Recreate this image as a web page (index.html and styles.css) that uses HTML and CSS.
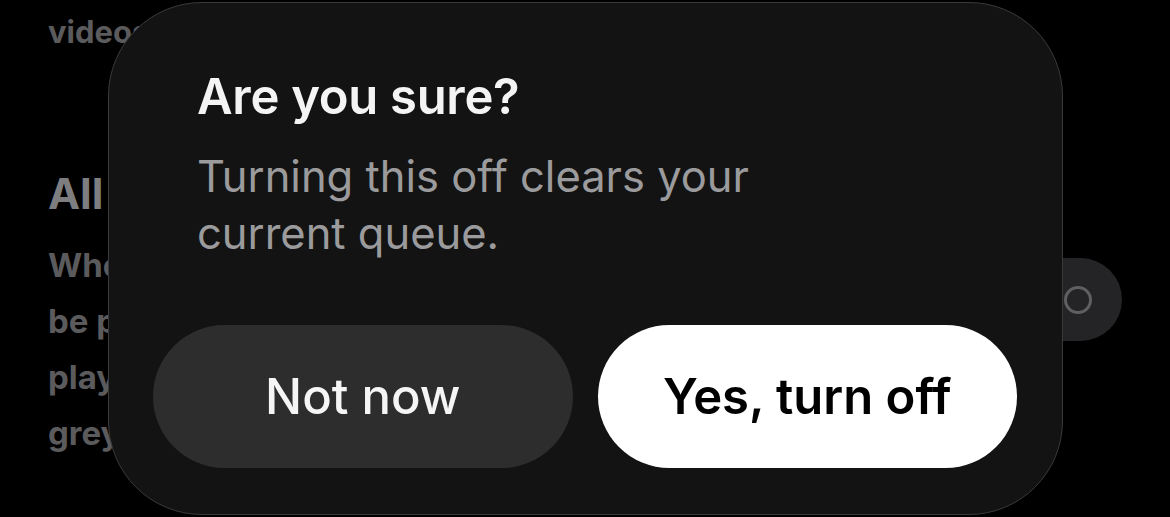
FILE: index.html
```html
<!DOCTYPE html>
<html lang="en">
<head>
<meta charset="utf-8">
<title>Are you sure?</title>
<link rel="stylesheet" href="styles.css">
</head>
<body>
<div class="page">
  <div class="settings">
    <div class="settings-text">
      <p class="prev">videos</p>
      <h2 class="heading">All queue autoplay</h2>
      <p class="desc">When on, similar videos will<br>be played after your queue or<br>playlist ends. When off, it is<br>greyed out.</p>
    </div>
    <div class="toggle"><span class="knob"></span></div>
  </div>

  <div class="dialog" role="dialog">
    <div class="dialog-body">
      <h1 class="title">Are you sure?</h1>
      <p class="message">Turning this off clears your<br>current queue.</p>
    </div>
    <div class="actions">
      <button class="btn btn-secondary">Not now</button>
      <button class="btn btn-primary">Yes, turn off</button>
    </div>
  </div>
</div>
</body>
</html>
```
FILE: styles.css
```css
* { box-sizing: border-box; }
html, body {
  margin: 0;
  padding: 0;
  background: #000;
  width: 1170px;
  height: 517px;
  overflow: hidden;
  font-family: Inter, "Liberation Sans", sans-serif;
}
.page {
  position: relative;
  width: 1170px;
  height: 517px;
}
.settings {
  display: flex;
  justify-content: space-between;
  padding: 0 48px 0 48px;
}
.settings-text {
  padding-top: 12px;
}
.prev {
  margin: 0;
  font-size: 31px;
  line-height: 40px;
  font-weight: 700;
  color: #5b5b5d;
}
.heading {
  margin: 116px 0 0 0;
  font-size: 43px;
  line-height: 50px;
  font-weight: 700;
  color: #7e7e80;
}
.desc {
  margin: 19px 0 0 0;
  font-size: 33px;
  line-height: 56px;
  font-weight: 700;
  color: #5b5b5d;
}
.toggle {
  margin-top: 258px;
  width: 120px;
  height: 83px;
  border-radius: 42px;
  background: #242426;
  display: flex;
  align-items: center;
  padding-left: 62px;
}
.knob {
  width: 28px;
  height: 28px;
  border-radius: 50%;
  border: 3px solid #5f5f61;
}
.dialog {
  position: absolute;
  left: 108px;
  top: 2px;
  width: 955px;
  height: 513px;
  background: #131313;
  border: 1.5px solid #3a3a3c;
  border-radius: 94px;
  padding: 0 45px 46px 44px;
  display: flex;
  flex-direction: column;
  justify-content: space-between;
}
.dialog-body {
  padding: 64px 44px 0 44px;
}
.title {
  margin: 0;
  font-size: 49px;
  line-height: 60px;
  font-weight: 600;
  color: #f4f4f4;
  letter-spacing: -0.3px;
}
.message {
  margin: 21px 0 0 0;
  font-size: 43.5px;
  line-height: 57px;
  font-weight: 400;
  color: #9b9b9d;
}
.actions {
  display: grid;
  grid-template-columns: 1fr 1fr;
  gap: 25px;
}
.btn {
  height: 143px;
  border: none;
  border-radius: 72px;
  font-family: Inter, "Liberation Sans", sans-serif;
  font-size: 49px;
  font-weight: 500;
  padding: 0;
}
.btn-secondary {
  background: #2d2d2d;
  color: #f5f5f5;
}
.btn-primary {
  background: #ffffff;
  color: #000;
  font-weight: 600;
}
```
